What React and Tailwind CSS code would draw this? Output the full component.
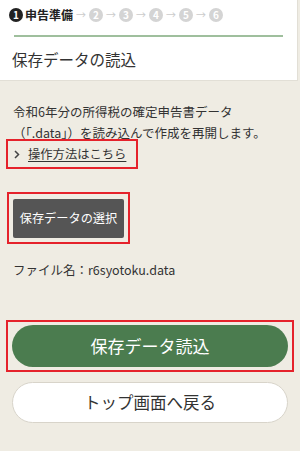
import React from 'react';

const steps = ['2', '3', '4', '5', '6'];

function StepCircle({ num, active }) {
    return (
        <span
            className={
                active
                    ? 'inline-flex items-center justify-center w-[14px] h-[14px] rounded-full bg-[#222] text-white text-[10px] font-bold leading-none'
                    : 'inline-flex items-center justify-center w-[14px] h-[14px] rounded-full bg-[#d4d4d4] text-white text-[10px] font-bold leading-none'
            }
        >
            {num}
        </span>
    );
}

export default function App() {
    return (
        <div
            className="min-h-[451px] bg-[#efece3] text-[#333]"
            style={{ fontFamily: '"Noto Sans CJK JP", "Noto Sans", sans-serif' }}
        >
            {/* Header */}
            <div className="bg-white h-[81px] mr-[2px] border-r border-b border-[#e2dfd6] pt-[7px]">
                <div className="flex items-center h-[16px] pl-[9px]">
                    <StepCircle num="1" active />
                    <span className="ml-[2px] text-[12px] font-bold text-[#222] leading-none">申告準備</span>
                    {steps.map((s) => (
                        <span key={s} className="flex items-center">
                            <span className="w-[16px] text-center text-[10px] text-[#ccc] leading-none">→</span>
                            <StepCircle num={s} />
                        </span>
                    ))}
                </div>
                <div className="mx-[14px] mt-[12px] h-[1.5px] bg-[#9fbf9d]"></div>
                <h1 className="pl-[12px] mt-[12px] text-[15.5px] leading-[20px] text-[#333]">保存データの読込</h1>
            </div>

            {/* Body */}
            <div className="px-[13px] pt-[20px] text-[12.5px] leading-[21px] text-[#333]">
                <p>令和6年分の所得税の確定申告書データ</p>
                <p>（「.data」）を読み込んで作成を再開します。</p>
            </div>

            <div className="-mt-[4px] ml-[6px] w-[132px] h-[30px] border-2 border-[#e5222b] flex items-center pl-[6px]">
                <svg width="6" height="9" viewBox="0 0 6 9" className="mr-[8px]">
                    <polyline points="1,1 4.5,4.5 1,8" fill="none" stroke="#444" strokeWidth="1.5" />
                </svg>
                <a className="text-[12.3px] underline underline-offset-2 text-[#333]">操作方法はこちら</a>
            </div>

            <div className="mt-[23px] ml-[7px] w-[123px] h-[52px] border-2 border-[#e5222b] flex items-center justify-center">
                <button className="w-[111px] h-[39px] bg-[#555] rounded-[2px] text-white text-[12.2px]">
                    保存データの選択
                </button>
            </div>

            <p className="mt-[16px] pl-[13px] text-[12.5px] leading-[20px] text-[#333]">ファイル名：r6syotoku.data</p>

            <div className="mt-[40px] mx-[6px] h-[52px] border-2 border-[#e5222b] flex items-center px-[4px]">
                <button className="w-full h-[42px] rounded-full bg-[#4b7c4f] text-white text-[17px]">
                    保存データ読込
                </button>
            </div>

            <div className="mt-[10px] px-[12px]">
                <button className="w-full h-[41px] rounded-full bg-white border border-[#d8d4ca] text-[#333] text-[16.5px]">
                    トップ画面へ戻る
                </button>
            </div>
        </div>
    );
}
